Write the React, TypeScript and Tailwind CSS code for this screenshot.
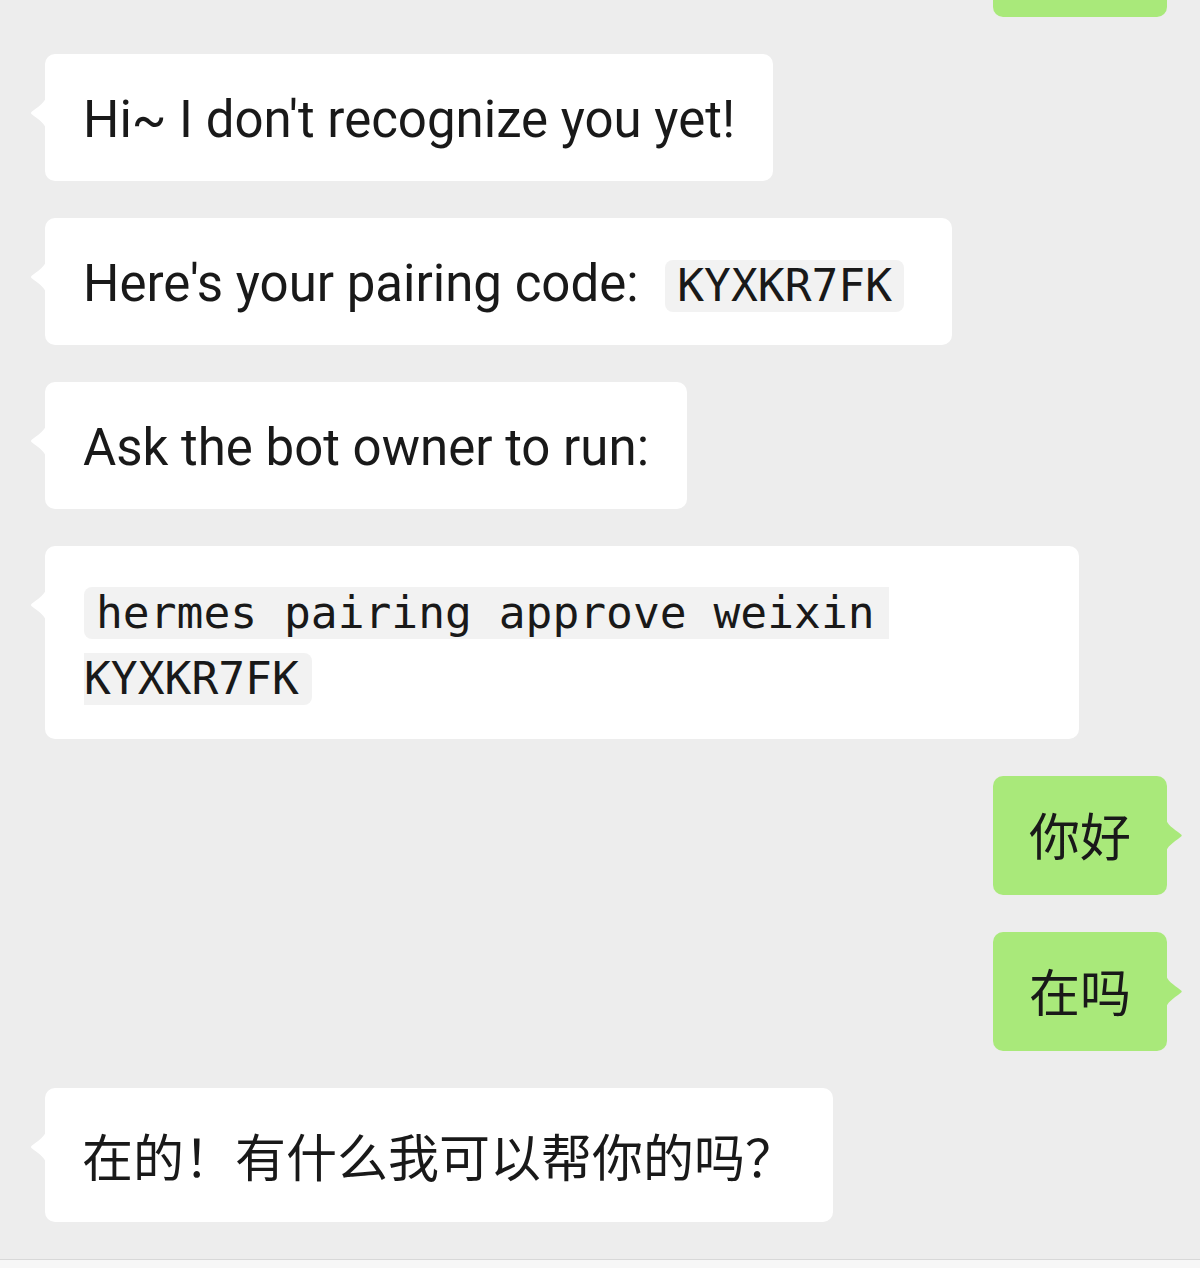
import type { ReactNode } from 'react';

// ─── Chat bubbles ─────────────────────────────────────────────────────────────

const SANS = "font-['Roboto','Noto_Sans_CJK_SC',sans-serif]";
const MONO = "font-['DejaVu_Sans_Mono','Liberation_Mono',monospace]";

function LeftTail() {
  return (
    <svg className="absolute left-[-15px] top-[42px]" width="16" height="34" viewBox="0 0 16 34">
      <path d="M16 0 C16 6 8 11 2 15.5 Q0 17 2 18.5 C8 23 16 28 16 34 Z" fill="#ffffff" />
    </svg>
  );
}

function RightTail() {
  return (
    <svg className="absolute right-[-16px] top-[42px]" width="17" height="35" viewBox="0 0 17 35">
      <path d="M0 0 C0 6 8 11 14.5 16 Q17 17.5 14.5 19 C8 24 0 29 0 35 Z" fill="#a9e97a" />
    </svg>
  );
}

function BotBubble({ children, className = '' }: { children: ReactNode; className?: string }) {
  return (
    <div className="flex justify-start">
      <div className={`relative rounded-[10px] bg-white text-[#191919] ${className}`}>
        <LeftTail />
        {children}
      </div>
    </div>
  );
}

function MeBubble({ children }: { children: ReactNode }) {
  return (
    <div className="flex justify-end">
      <div className="relative rounded-[10px] bg-[#a9e97a] px-[36px] pt-[34px] pb-[27px] text-[51px] leading-[58px] text-[#191919]">
        <RightTail />
        {children}
      </div>
    </div>
  );
}

function Code({ children, className = '' }: { children: ReactNode; className?: string }) {
  return (
    <code className={`${MONO} bg-[#f2f2f2] text-[44.6px] leading-[40px] ${className}`}>{children}</code>
  );
}

export default function App() {
  return (
    <div className={`${SANS} flex h-[1268px] w-[1200px] flex-col overflow-hidden bg-[#ededed]`}>
      <div className="flex flex-1 flex-col gap-[37px] pl-[45px] pr-[33px]">
        {/* previous message, scrolled mostly out of view */}
        <div className="flex justify-end">
          <div className="h-[17px] w-[174px] rounded-b-[10px] bg-[#a9e97a]" />
        </div>

        <BotBubble className="px-[38px] pt-[33px] pb-[28px] text-[51px] leading-[66px]">
          Hi~ I don't recognize you yet!
        </BotBubble>

        <BotBubble className="pl-[38px] pr-[48px] pt-[33px] pb-[28px] text-[51px] leading-[66px]">
          Here's your pairing code:{' '}
          <Code className="ml-[14px] rounded-[8px] px-[12px]">KYXKR7FK</Code>
        </BotBubble>

        <BotBubble className="px-[38px] pt-[33px] pb-[28px] text-[51px] leading-[66px]">
          Ask the bot owner to run:
        </BotBubble>

        <BotBubble className="w-[1034px] px-[39px] pt-[32px] pb-[29px] text-[51px] leading-[66px]">
          <Code className="rounded-l-[8px] pl-[12px] pr-[14px]">hermes pairing approve weixin</Code>
          <br />
          <Code className="rounded-r-[8px] pr-[13px]">KYXKR7FK</Code>
        </BotBubble>

        <MeBubble>你好</MeBubble>
        <MeBubble>在吗</MeBubble>

        <BotBubble className="px-[37px] pt-[35px] pb-[25px] text-[51px] leading-[74px]">
          在的！有什么我可以帮你的吗？
        </BotBubble>
      </div>

      {/* input bar edge */}
      <div className="h-[9px] border-t border-[#d8d8d8] bg-[#f7f7f7]" />
    </div>
  );
}
